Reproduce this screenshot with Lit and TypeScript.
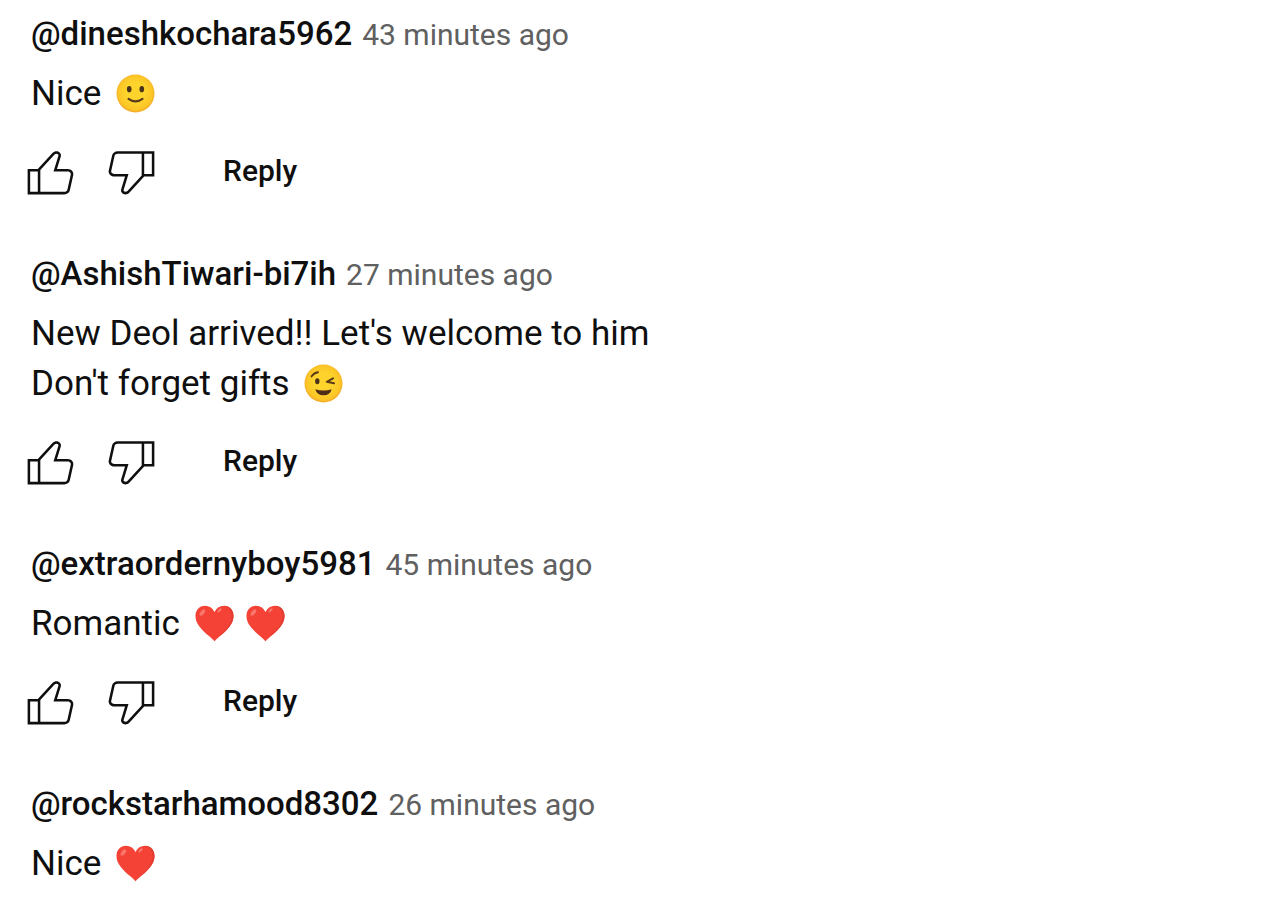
import { LitElement, html, css, svg, nothing } from "lit";
import { customElement, property } from "lit/decorators.js";

type Part = string | { emoji: "smile" | "wink" | "heart" };

interface Comment {
  author: string;
  time: string;
  lines: Part[][];
  actions: boolean;
}

const COMMENTS: Comment[] = [
  {
    author: "@dineshkochara5962",
    time: "43 minutes ago",
    lines: [["Nice ", { emoji: "smile" }]],
    actions: true,
  },
  {
    author: "@AshishTiwari-bi7ih",
    time: "27 minutes ago",
    lines: [["New Deol arrived!! Let's welcome to him"], ["Don't forget gifts ", { emoji: "wink" }]],
    actions: true,
  },
  {
    author: "@extraordernyboy5981",
    time: "45 minutes ago",
    lines: [["Romantic ", { emoji: "heart" }, { emoji: "heart" }]],
    actions: true,
  },
  {
    author: "@rockstarhamood8302",
    time: "26 minutes ago",
    lines: [["Nice ", { emoji: "heart" }]],
    actions: false,
  },
];

const LIKE = svg`<path d="M18.77,11h-4.23l1.52-4.94C16.38,5.03,15.54,4,14.38,4c-0.58,0-1.14,0.24-1.52,0.65L7,11H3v10h4h1h9.43c1.06,0,1.98-0.67,2.19-1.61l1.34-6C21.23,12.15,20.18,11,18.77,11z M7,20H4v-8h3V20z M19.98,13.17l-1.34,6C18.54,19.65,18.03,20,17.43,20H8v-8.61l5.6-6.06C13.79,5.12,14.08,5,14.38,5c0.26,0,0.5,0.11,0.63,0.3c0.07,0.1,0.15,0.26,0.09,0.47l-1.52,4.94L13.18,12h1.35h4.23c0.41,0,0.8,0.17,1.03,0.46C19.92,12.61,20.05,12.86,19.98,13.17z"/>`;

const DISLIKE = svg`<path d="M17,4h-1H6.57C5.5,4,4.59,4.67,4.38,5.61l-1.34,6C2.77,12.85,3.82,14,5.23,14h4.23l-1.52,4.94C7.62,19.97,8.46,21,9.62,21c0.58,0,1.14-0.24,1.52-0.65L17,14h4V4H17z M10.4,19.67C10.21,19.88,9.92,20,9.62,20c-0.26,0-0.5-0.11-0.63-0.3c-0.07-0.1-0.15-0.26-0.09-0.47l1.52-4.94l0.4-1.29H9.46H5.23c-0.41,0-0.8-0.17-1.03-0.46c-0.12-0.15-0.25-0.4-0.18-0.72l1.34-6C5.46,5.35,5.97,5,6.57,5H16v8.61L10.4,19.67z M20,13h-3V5h3V13z"/>`;

const FACE = svg`
  <defs>
    <radialGradient id="face" cx="50%" cy="48%" r="52%">
      <stop offset="0.5" stop-color="#fdd32c"/>
      <stop offset="0.85" stop-color="#fcc626"/>
      <stop offset="1" stop-color="#f2a92b"/>
    </radialGradient>
  </defs>
  <circle cx="19.5" cy="19.5" r="19" fill="url(#face)"/>`;

const EMOJI = {
  smile: svg`${FACE}
    <ellipse cx="13.2" cy="15.2" rx="2.3" ry="3.1" fill="#4a331c"/>
    <ellipse cx="25.8" cy="15.2" rx="2.3" ry="3.1" fill="#4a331c"/>
    <path d="M12.5 24.8Q19.5 30 26.5 24.8" fill="none" stroke="#5a3a1a" stroke-width="2.1" stroke-linecap="round"/>`,
  wink: svg`${FACE}
    <path d="M7.6 12.4Q9.6 8.8 14 8.2" fill="none" stroke="#5a3a1a" stroke-width="1.9" stroke-linecap="round"/>
    <ellipse cx="13.3" cy="17.2" rx="2.2" ry="3" fill="#4a331c"/>
    <path d="M29 14.4L22.8 17.8L30 19.2" fill="none" stroke="#5a3a1a" stroke-width="2.1" stroke-linecap="round" stroke-linejoin="round"/>
    <path d="M11.3 25.2Q19.5 28 27.7 25.2Q26.2 31.2 19.5 31.2T11.3 25.2Z" fill="#4f2d18"/>`,
  heart: svg`
    <path d="M19.5 37.2C16.4 33.2 9.5 29.4 4.6 22.8C1.4 18.5 0.4 15.3 0.5 11.4C0.7 5.8 4.8 1.8 9.9 1.8C14.2 1.8 17.4 4 19.5 7.9C21.6 4 24.8 1.8 29.1 1.8C34.2 1.8 38.3 5.8 38.5 11.4C38.6 15.3 37.6 18.5 34.4 22.8C29.5 29.4 22.6 33.2 19.5 37.2Z" fill="#f44336"/>
    <path d="M29.1 1.8C34.2 1.8 38.3 5.8 38.5 11.4C38.6 15.3 37.6 18.5 34.4 22.8C29.5 29.4 22.6 33.2 19.5 37.2C23 32.5 36.8 23.5 36.6 11.8C36.4 6.6 33 3 29.1 1.8Z" fill="#e03d33"/>
    <ellipse cx="7.4" cy="8.6" rx="1.9" ry="3.7" transform="rotate(38 7.4 8.6)" fill="#f9766d"/>
    <ellipse cx="24.6" cy="6.4" rx="1.2" ry="2.6" transform="rotate(48 24.6 6.4)" fill="#f9766d"/>`,
};

const EMOJI_LABEL = { smile: "slightly smiling face", wink: "winking face", heart: "red heart" };

@customElement("comment-item")
class CommentItem extends LitElement {
  @property({ attribute: false }) comment!: Comment;

  static styles = css`
    :host {
      display: block;
      color: #0f0f0f;
    }
    .head {
      display: flex;
      flex-wrap: wrap;
      align-items: baseline;
      column-gap: 10px;
      margin: 0;
      font-weight: 400;
      line-height: 46px;
    }
    a {
      color: inherit;
      text-decoration: none;
    }
    .author {
      font-size: 33px;
      font-weight: 500;
    }
    .time {
      color: #606060;
      font-size: 30px;
    }
    .body {
      margin: 11px 0 0;
      font-size: 35px;
      line-height: 50px;
    }
    .line {
      display: block;
    }
    .emoji {
      width: 39px;
      height: 39px;
      margin: 0 6px;
      vertical-align: -8px;
    }
    .actions {
      display: flex;
      align-items: center;
      margin: 12px 0 0 -21px;
    }
    button {
      display: flex;
      align-items: center;
      justify-content: center;
      height: 80px;
      padding: 0;
      border: 0;
      background: none;
      color: inherit;
      font: 500 30px/40px Roboto, sans-serif;
      cursor: pointer;
    }
    .icon {
      width: 81px;
    }
    .icon svg {
      width: 61px;
      height: 61px;
      fill: currentColor;
    }
    .reply {
      margin-left: 19px;
      padding: 0 32px;
    }
  `;

  private part(p: Part) {
    if (typeof p === "string") return p;
    return html`<svg class="emoji" viewBox="0 0 39 39" role="img" aria-label=${EMOJI_LABEL[p.emoji]}>${EMOJI[p.emoji]}</svg>`;
  }

  render() {
    const c = this.comment;
    return html`
      <article>
        <h3 class="head">
          <a class="author" href="#">${c.author}</a>
          <a class="time" href="#">${c.time}</a>
        </h3>
        <p class="body">
          ${c.lines.map((l) => html`<span class="line">${l.map((p) => this.part(p))}</span>`)}
        </p>
        ${c.actions
          ? html`<div class="actions">
              <button class="icon" aria-label="Like"><svg viewBox="0 0 24 24">${LIKE}</svg></button>
              <button class="icon" aria-label="Dislike"><svg viewBox="0 0 24 24">${DISLIKE}</svg></button>
              <button class="reply">Reply</button>
            </div>`
          : nothing}
      </article>
    `;
  }
}

@customElement("app-root")
class AppRoot extends LitElement {
  static styles = css`
    :host {
      display: block;
      background: #fff;
      font-family: Roboto, sans-serif;
    }
    .list {
      display: flex;
      flex-direction: column;
      gap: 40px;
      padding: 11px 31px 0;
    }
  `;

  render() {
    return html`
      <main class="list">
        ${COMMENTS.map((c) => html`<comment-item .comment=${c}></comment-item>`)}
      </main>
    `;
  }
}
